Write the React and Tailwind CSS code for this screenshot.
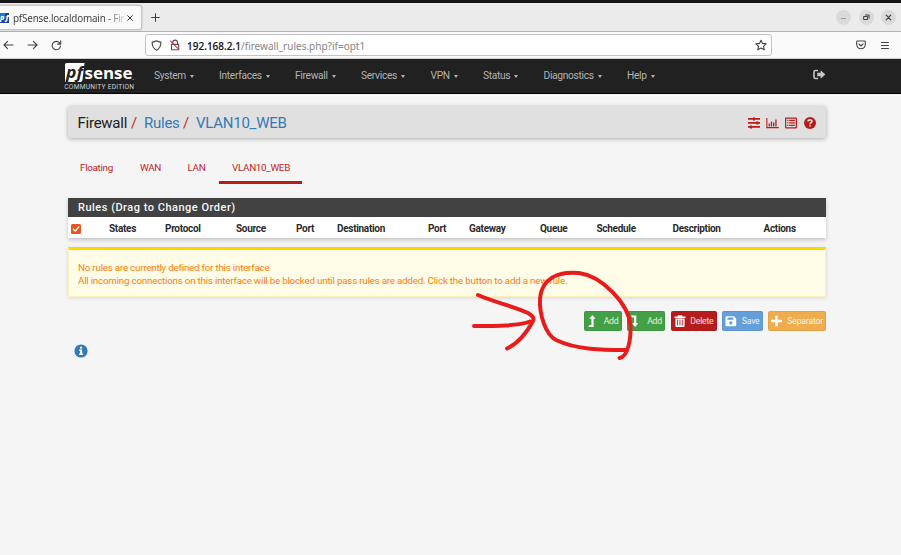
import React from "react";

const MENUS = [
  { label: "System", width: "w-[65px]" },
  { label: "Interfaces", width: "w-[76px]" },
  { label: "Firewall", width: "w-[66px]" },
  { label: "Services", width: "w-[69.5px]" },
  { label: "VPN", width: "w-[52.5px]" },
  { label: "Status", width: "w-[60.5px]" },
  { label: "Diagnostics", width: "w-[83.5px]" },
  { label: "Help", width: "w-[60px]" },
];

const COLUMNS = ["States", "Protocol", "Source", "Port", "Destination", "Port", "Gateway", "Queue", "Schedule", "Description", "Actions"];

function Stroke({ children, className, box = "0 0 16 16", width = 1.3 }) {
  return (
    <svg viewBox={box} className={className} fill="none" stroke="currentColor" strokeWidth={width} strokeLinecap="round" strokeLinejoin="round">
      {children}
    </svg>
  );
}

function WindowButton({ children }) {
  return (
    <span className="flex h-[15px] w-[15px] items-center justify-center rounded-full bg-[#dadada] text-[#3d3d3d]">{children}</span>
  );
}

function TabStrip() {
  return (
    <div className="flex h-[29px] items-center justify-between border-b border-[#b3b3b3] bg-[#ebebeb]">
      <div className="flex h-full items-center">
        <div className="mt-px flex h-[25px] w-[142px] items-center rounded-r-[3px] border border-l-0 border-[#c6c6c6] bg-[#fafafa] shadow-[0_0_2px_rgba(0,0,0,0.25)]">
          <svg viewBox="0 0 9 10" className="h-[10px] w-[9px] shrink-0">
            <rect width="9" height="10" fill="#1c3f9e" />
            <rect width="5" height="4" fill="#1c79d0" />
            <text x="0" y="7.400" fontFamily="Open Sans, sans-serif" fontWeight="800" fontStyle="italic" fontSize="7.500" fill="#fff" textLength="8.500">pf</text>
          </svg>
          <span className="ml-[4px] w-[113px] whitespace-nowrap bg-gradient-to-r from-[#3a3a3e] from-82% to-[#3a3a3e]/10 bg-clip-text font-['Noto_Sans'] text-[9.900px] leading-[14px] tracking-[-0.200px] text-transparent">
            pfSense.localdomain - Fir
          </span>
          <Stroke className="ml-[1px] h-[6px] w-[6px] text-[#333]" box="0 0 6 6" width={1}>
            <path d="M.7.700l4.600 4.600M5.300.700L.7 5.300" />
          </Stroke>
        </div>
        <Stroke className="ml-[9px] h-[9px] w-[9px] text-[#3c3c3c]" box="0 0 9 9" width={1}>
          <path d="M4.500.7v7.600M.7 4.500h7.600" />
        </Stroke>
      </div>
      <div className="mr-[5px] flex gap-[7.500px]">
        <WindowButton><span className="mt-[3px] h-[1.500px] w-[5px] bg-[#999]" /></WindowButton>
        <WindowButton>
          <Stroke className="h-[7px] w-[7px]" box="0 0 7 7" width={1}><path d="M1 2.500h3.600v3H1zM2.500 1h3.600v3.200" /></Stroke>
        </WindowButton>
        <WindowButton>
          <Stroke className="h-[7px] w-[7px]" box="0 0 7 7" width={1.2}><path d="M1.200 1.200l4.600 4.600M5.800 1.200L1.200 5.800" /></Stroke>
        </WindowButton>
      </div>
    </div>
  );
}

function AddressBar() {
  return (
    <div className="flex h-[27px] items-center border-b border-[#d0d0d0] bg-[#fafafa] text-[#444]">
      <Stroke className="ml-[3px] h-[10px] w-[11px]" box="0 0 11 10" width={1.1}><path d="M10 5H1M4.600 1.400L1 5l3.600 3.600" /></Stroke>
      <Stroke className="ml-[13px] h-[10px] w-[11px]" box="0 0 11 10" width={1.1}><path d="M1 5h9M6.400 1.400L10 5 6.400 8.600" /></Stroke>
      <Stroke className="ml-[13px] h-[11px] w-[11px]" box="0 0 11 11" width={1.1}><path d="M9.500 6A4.200 4.200 0 1 1 8.600 2.900L9.600 4M9.700.9V4.100H6.500" /></Stroke>
      <div className="ml-[83px] flex h-[22px] w-[627px] items-center rounded-[3px] border border-[#c4c4c8] bg-white pl-[5px] pr-[4px]">
        <Stroke className="h-[11px] w-[11px] shrink-0" box="0 0 11 11" width={1.1}><path d="M5.500.8c1.400.9 2.800 1.200 4.400 1.300 0 3.800-.9 6.500-4.400 8.200C2 8.600 1.100 5.900 1.100 2.100 2.700 2 4.100 1.700 5.500.8z" /></Stroke>
        <svg viewBox="0 0 12 12" className="ml-[7px] h-[12px] w-[12px] shrink-0" fill="none">
          <path d="M3.700 5V3.500a2.400 2.400 0 0 1 4.800 0V5M2.500 5.400h7.200v5.300H2.500z" stroke="#555" strokeWidth="1.100" />
          <path d="M1.200 1.600l8.800 9" stroke="#e22850" strokeWidth="1.100" />
        </svg>
        <span className="ml-[6px] mt-px grow whitespace-nowrap font-['Noto_Sans'] text-[10px] leading-[14px] text-[#858588]">
          <span className="font-medium text-[#15141a] [-webkit-text-stroke:0.150px_#15141a]">192.168.2.1</span>/firewall_rules.php?if=opt1
        </span>
        <Stroke className="h-[12px] w-[12px]" box="0 0 12 11" width={1.1}><path d="M6 .8l1.500 3.100 3.600.5-2.600 2.400.7 3.400L6 8.600l-3.200 1.600.7-3.400L.9 4.400l3.600-.5z" /></Stroke>
      </div>
      <Stroke className="ml-[84px] h-[10px] w-[10px]" box="0 0 10 10" width={1.1}><path d="M1.500 1h7q.8 0 .8.800v2.700a4.300 4.300 0 0 1-8.600 0V1.800Q.700 1 1.500 1zM3 4l2 2 2-2" /></Stroke>
      <Stroke className="ml-[15px] h-[8px] w-[8px]" box="0 0 8 8" width={1}><path d="M.5 1.500h7M.5 4.500h7M.5 7.500h7" /></Stroke>
    </div>
  );
}

function Logo() {
  return (
    <svg viewBox="0 0 72 28" className="ml-[64px] h-[28px] w-[72px] shrink-0 overflow-visible">
      <path d="M1 1.500q0-1.500 1.500-1.500H20.500L18.500 17q-.2 2-2 2H1z" fill="#fff" />
      <text x="2" y="14.500" fontFamily="Open Sans, sans-serif" fontWeight="700" fontStyle="italic" fontSize="16" fill="#212121" textLength="17" lengthAdjust="spacingAndGlyphs">pf</text>
      <text x="20.500" y="15.500" fontFamily="Open Sans, sans-serif" fontWeight="700" fontSize="15.500" fill="#fff" textLength="48" lengthAdjust="spacingAndGlyphs">sense</text>
      <circle cx="69.300" cy="16.500" r=".6" fill="#bbb" />
      <text x="0.300" y="26.100" fontFamily="Roboto, sans-serif" fontSize="6.600" fill="#d2d2d2" textLength="69.700" lengthAdjust="spacing">COMMUNITY EDITION</text>
    </svg>
  );
}

function NavBar() {
  return (
    <nav className="flex h-[35px] border-b border-black bg-[#212121] pt-[4px] text-[#b4b4b4]">
      <Logo />
      <ul className="ml-[18px] flex h-[26px] items-center text-[10.200px] tracking-[-0.300px]">
        {MENUS.map((m) => (
          <li key={m.label} className={`flex items-center ${m.width}`}>
            {m.label}
            <span className="ml-[4px] mt-[1px] border-x-[2.800px] border-t-[3px] border-x-transparent border-t-[#b4b4b4]" />
          </li>
        ))}
      </ul>
      <svg viewBox="0 0 13 10" className="ml-[126px] mt-[6px] h-[11px] w-[13px]">
        <path d="M5 1H2.500Q1 1 1 2.500v5Q1 9 2.500 9H5" fill="none" stroke="#c4c4c4" strokeWidth="1.600" />
        <path d="M4.200 3.300h3.400V.8L12.400 5 7.600 9.200V6.700H4.200z" fill="#c4c4c4" />
      </svg>
    </nav>
  );
}

function Breadcrumb() {
  return (
    <header className="flex h-[32px] items-center justify-between rounded-[3px] bg-[#e0e0e0] pl-[9.500px] pr-[10.500px] pt-[1.500px] text-[15px] tracking-[-0.250px] text-[#337ab7] shadow-[0_1px_4px_rgba(0,0,0,0.3)]">
      <div className="flex whitespace-nowrap">
        <span className="w-[53.500px] text-[#212121]">Firewall</span>
        <span className="w-[13px] text-[#c62828]">/</span>
        <span className="w-[39px]">Rules</span>
        <span className="w-[13px] text-[#c62828]">/</span>
        <span>VLAN10_WEB</span>
      </div>
      <div className="flex items-center gap-[6.200px] text-[#b71c1c]">
        <svg viewBox="0 0 12 12" className="h-[12px] w-[12px]" fill="currentColor">
          <path d="M0 1.100h12v1.600H0zM0 5.100h12v1.600H0zM0 9.100h12v1.600H0zM5 .4h2v3H5zM8.300 4.400h2v3h-2zM2 8.400h2v3H2z" />
        </svg>
        <svg viewBox="0 0 13 12" className="h-[12px] w-[13px]" fill="currentColor">
          <path d="M.3 1h1.100v9h11.400v1.200H.3zM2.600 6.500h1.300v3H2.600zM4.800 4.400h1.300v5.100H4.800zM7 5.500h1.300v4H7zM9.300 2.500h1.300v7H9.300z" />
        </svg>
        <svg viewBox="0 0 12 12" className="h-[12px] w-[12px]" fill="currentColor">
          <path fillRule="evenodd" d="M.8.600h10.400q.8 0 .8.800v9.200q0 .8-.8.800H.8Q0 11.400 0 10.600V1.400Q0 .6.8.6zM1.200 1.800v8.400h9.600V1.800zM2.200 2.800h1.200V4H2.200zM4.200 2.800h5.700V4H4.200zM2.200 5.300h1.200v1.200H2.200zM4.200 5.300h5.700v1.200H4.200zM2.200 7.800h1.200V9H2.200zM4.200 7.800h5.700V9H4.200z" />
        </svg>
        <svg viewBox="0 0 12 12" className="h-[12px] w-[12px]">
          <circle cx="6" cy="6" r="6" fill="currentColor" />
          <path d="M4 4.500C4.100 2.300 8 2.300 8 4.400 8 5.700 6.100 5.700 6.100 7.200M6.100 8.200v1.400" fill="none" stroke="#e0e0e0" strokeWidth="1.600" />
        </svg>
      </div>
    </header>
  );
}

function Tabs() {
  return (
    <div className="mt-[12px] flex h-[34px] text-[9.900px] leading-[35px] tracking-[-0.330px] text-[#c21f1f]">
      <span className="ml-[12px] w-[60px]">Floating</span>
      <span className="w-[47.500px]">WAN</span>
      <span className="w-[31.500px]">LAN</span>
      <span className="w-[83px] border-b-[3px] border-[#b71c1c] pl-[13px]">VLAN10_WEB</span>
    </div>
  );
}

function RulesPanel() {
  return (
    <section className="mt-[14px] mr-[0.500px] bg-white shadow-[0_2px_4px_rgba(0,0,0,0.2)]">
      <h2 className="h-[19px] bg-[#424242] pl-[10px] text-[11px] font-medium leading-[19px] tracking-[0.500px] text-[#f5f5f5]">Rules (Drag to Change Order)</h2>
      <div className="grid h-[21px] grid-cols-[41px_56px_71px_60px_41px_91px_41px_71px_56.5px_76px_91px_1fr] items-center pt-[2px] text-[10px] font-bold tracking-[-0.300px] text-[#2b2b2b]">
        <span className="ml-[3px] flex h-[10px] w-[10px] items-center justify-center rounded-[1.500px] bg-[#e95420] text-white">
          <Stroke className="h-[8px] w-[8px]" box="0 0 8 8" width={1.4}><path d="M1.300 4.200l1.900 1.900L6.800 2" /></Stroke>
        </span>
        {COLUMNS.map((c, i) => (
          <span key={i}>{c}</span>
        ))}
      </div>
    </section>
  );
}

function ActionButton({ label, className, children }) {
  return (
    <button className={`flex h-[20px] items-center justify-between rounded-[2px] pl-[3px] pr-[3px] text-[8.700px] tracking-[-0.200px] text-white/85 shadow-[inset_0_0_0_1px_rgba(0,0,0,0.06)] ${className}`}>
      <svg viewBox="0 0 12 12" className="h-[12px] w-[12px] shrink-0" fill="#fff">{children}</svg>
      <span className="pt-px">{label}</span>
    </button>
  );
}

function Actions() {
  return (
    <div className="mt-[14px] flex justify-end gap-[5.500px]">
      <ActionButton label="Add" className="w-[38px] bg-[#43a047]">
        <path d="M5.400 0L8.500 3.800H6.600V12H1l1.700-1.900h1.700V3.800H2.300z" />
      </ActionButton>
      <ActionButton label="Add" className="w-[38px] bg-[#43a047]">
        <path d="M5.100 12L8.300 8.200H6.300V.5H.8l1.600 1.900h1.700v5.800H2z" />
      </ActionButton>
      <ActionButton label="Delete" className="w-[46px] bg-[#b71c1c]">
        <path fillRule="evenodd" d="M4 .2h4l.5 1.400h3V3H.5V1.600h3zM1.400 3.600h9.200V11q0 1-1 1H2.400q-1 0-1-1zM3.200 4.800v5.700h.9V4.800zM5.500 4.800v5.700h.9V4.800zM7.800 4.800v5.700h.9V4.800z" />
      </ActionButton>
      <ActionButton label="Save" className="w-[40.500px] bg-[#649fdc]">
        <path fillRule="evenodd" d="M1.500 1.200h7.300l2.400 2.400v6.700q0 1-1 1H1.500q-1 0-1-1V2.200q0-1 1-1zM2.500 2.500v2.300h5.800V2.500zM5.800 6.300a1.600 1.600 0 1 0 .01 0z" />
      </ActionButton>
      <ActionButton label="Separator" className="w-[58px] bg-[#f0ad4e]">
        <path d="M4.300.8h2.400v4h4.200v2.400H6.700v4H4.300v-4H.1V4.800h4.200z" />
      </ActionButton>
    </div>
  );
}

export default function App() {
  return (
    <div className="relative h-[555px] w-[901px] overflow-hidden bg-[#f5f5f5] font-[Roboto,'Liberation_Sans',sans-serif]">
      <div className="h-[3px] bg-[#151515]" />
      <TabStrip />
      <AddressBar />
      <NavBar />
      <main className="ml-[68px] w-[758px] pt-[12px]">
        <Breadcrumb />
        <Tabs />
        <RulesPanel />
        <section className="mt-[9px] mr-[0.500px] h-[50px] border border-t-[3px] border-[#fbf0bd] border-t-[#ffd600] bg-[#fffde7] pl-[9px] pt-[11px] text-[9.800px] leading-[13.300px] tracking-[-0.220px] text-[#ff7d0a] shadow-[0_1px_4px_rgba(0,0,0,0.12)]">
          <p>No rules are currently defined for this interface</p>
          <p>All incoming connections on this interface will be blocked until pass rules are added. Click the button to add a new rule.</p>
        </section>
        <Actions />
        <svg viewBox="0 0 14 14" className="ml-[6px] mt-[13px] h-[14px] w-[14px]">
          <circle cx="7" cy="7" r="6.600" fill="#337ab7" />
          <path d="M6 2.800h2.100v1.700H6zM5.200 5.500h2.900v4h.9v1.400H5.100V9.500H6V6.900h-.8z" fill="#fff" />
        </svg>
      </main>
      <svg viewBox="460 260 190 110" className="absolute left-[460px] top-[260px] h-[110px] w-[190px]" fill="none" stroke="#e81c1c" strokeWidth="3.900" strokeLinecap="round" strokeLinejoin="round">
        <path d="M478 295C494 302 515 307 528 313Q535 317 533 321C527 332 519 343 507 348.500" />
        <path d="M474 326C496 326 519 326 530 321.500" />
        <path d="M626 350C603 350 577 350 556 340C546 335 539 315 540 298C542 279 557 271 579 273C602 276 629 304 630.500 326C631 339 628 357 619.500 358" />
      </svg>
    </div>
  );
}
